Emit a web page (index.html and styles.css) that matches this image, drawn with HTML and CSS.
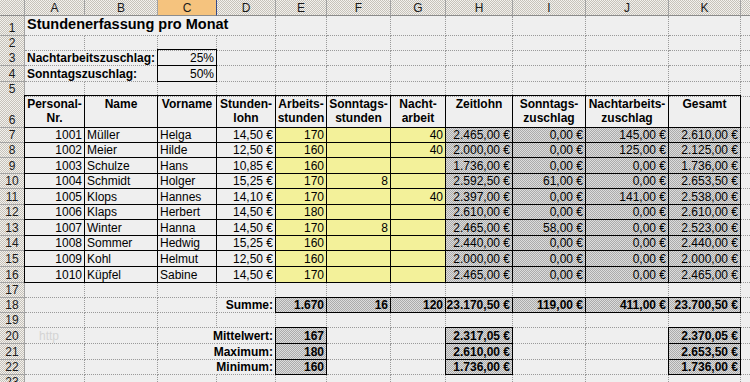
FILE: index.html
```html
<!DOCTYPE html>
<html lang="de">
<head>
<meta charset="utf-8">
<title>Stundenerfassung pro Monat</title>
<link rel="stylesheet" href="styles.css">
</head>
<body>
<div class="sheet">
  <div class="row h16">
    <div class="c hd"></div>
    <div class="c hd ctr">A</div>
    <div class="c hd ctr">B</div>
    <div class="c hd ctr sel">C</div>
    <div class="c hd ctr">D</div>
    <div class="c hd ctr">E</div>
    <div class="c hd ctr">F</div>
    <div class="c hd ctr">G</div>
    <div class="c hd ctr">H</div>
    <div class="c hd ctr">I</div>
    <div class="c hd ctr">J</div>
    <div class="c hd ctr">K</div>
    <div class="c hd last"></div>
  </div>

  <div class="row h20">
    <div class="c rh">1</div>
    <div class="c nb title">Stundenerfassung pro Monat</div>
    <div class="c nb"></div>
    <div class="c nb"></div>
    <div class="c"></div><div class="c"></div><div class="c"></div><div class="c"></div>
    <div class="c"></div><div class="c"></div><div class="c"></div><div class="c"></div>
    <div class="c last"></div>
  </div>

  <div class="row h14">
    <div class="c rh">2</div>
    <div class="c"></div><div class="c"></div><div class="c"></div><div class="c"></div>
    <div class="c"></div><div class="c"></div><div class="c"></div><div class="c"></div>
    <div class="c"></div><div class="c"></div><div class="c"></div>
    <div class="c last"></div>
  </div>

  <div class="row h16">
    <div class="c rh">3</div>
    <div class="c nb bold">Nachtarbeitszuschlag:</div>
    <div class="c"></div>
    <div class="c b r">25%</div>
    <div class="c"></div><div class="c"></div><div class="c"></div><div class="c"></div>
    <div class="c"></div><div class="c"></div><div class="c"></div><div class="c"></div>
    <div class="c last"></div>
  </div>

  <div class="row h16">
    <div class="c rh">4</div>
    <div class="c nb bold">Sonntagszuschlag:</div>
    <div class="c"></div>
    <div class="c b r">50%</div>
    <div class="c"></div><div class="c"></div><div class="c"></div><div class="c"></div>
    <div class="c"></div><div class="c"></div><div class="c"></div><div class="c"></div>
    <div class="c last"></div>
  </div>

  <div class="row h14">
    <div class="c rh">5</div>
    <div class="c"></div><div class="c"></div><div class="c"></div><div class="c"></div>
    <div class="c"></div><div class="c"></div><div class="c"></div><div class="c"></div>
    <div class="c"></div><div class="c"></div><div class="c"></div>
    <div class="c last"></div>
  </div>

  <div class="row h32">
    <div class="c rh">6</div>
    <div class="c b th">Personal-<br>Nr.</div>
    <div class="c b th">Name</div>
    <div class="c b th">Vorname</div>
    <div class="c b th">Stunden-<br>lohn</div>
    <div class="c b th">Arbeits-<br>stunden</div>
    <div class="c b th">Sonntags-<br>stunden</div>
    <div class="c b th">Nacht-<br>arbeit</div>
    <div class="c b th">Zeitlohn</div>
    <div class="c b th">Sonntags-<br>zuschlag</div>
    <div class="c b th">Nachtarbeits-<br>zuschlag</div>
    <div class="c b th">Gesamt</div>
    <div class="c last"></div>
  </div>

  <div class="row h15">
    <div class="c rh">7</div>
    <div class="c b r">1001</div><div class="c b">Müller</div><div class="c b">Helga</div><div class="c b r">14,50 €</div>
    <div class="c b r y">170</div><div class="c b r y"></div><div class="c b r y">40</div>
    <div class="c b r g">2.465,00 €</div><div class="c b r g">0,00 €</div><div class="c b r g">145,00 €</div><div class="c b r g">2.610,00 €</div>
    <div class="c last"></div>
  </div>

  <div class="row h15">
    <div class="c rh">8</div>
    <div class="c b r">1002</div><div class="c b">Meier</div><div class="c b">Hilde</div><div class="c b r">12,50 €</div>
    <div class="c b r y">160</div><div class="c b r y"></div><div class="c b r y">40</div>
    <div class="c b r g">2.000,00 €</div><div class="c b r g">0,00 €</div><div class="c b r g">125,00 €</div><div class="c b r g">2.125,00 €</div>
    <div class="c last"></div>
  </div>

  <div class="row h16">
    <div class="c rh">9</div>
    <div class="c b r">1003</div><div class="c b">Schulze</div><div class="c b">Hans</div><div class="c b r">10,85 €</div>
    <div class="c b r y">160</div><div class="c b r y"></div><div class="c b r y"></div>
    <div class="c b r g">1.736,00 €</div><div class="c b r g">0,00 €</div><div class="c b r g">0,00 €</div><div class="c b r g">1.736,00 €</div>
    <div class="c last"></div>
  </div>

  <div class="row h15">
    <div class="c rh">10</div>
    <div class="c b r">1004</div><div class="c b">Schmidt</div><div class="c b">Holger</div><div class="c b r">15,25 €</div>
    <div class="c b r y">170</div><div class="c b r y">8</div><div class="c b r y"></div>
    <div class="c b r g">2.592,50 €</div><div class="c b r g">61,00 €</div><div class="c b r g">0,00 €</div><div class="c b r g">2.653,50 €</div>
    <div class="c last"></div>
  </div>

  <div class="row h16">
    <div class="c rh">11</div>
    <div class="c b r">1005</div><div class="c b">Klops</div><div class="c b">Hannes</div><div class="c b r">14,10 €</div>
    <div class="c b r y">170</div><div class="c b r y"></div><div class="c b r y">40</div>
    <div class="c b r g">2.397,00 €</div><div class="c b r g">0,00 €</div><div class="c b r g">141,00 €</div><div class="c b r g">2.538,00 €</div>
    <div class="c last"></div>
  </div>

  <div class="row h15">
    <div class="c rh">12</div>
    <div class="c b r">1006</div><div class="c b">Klaps</div><div class="c b">Herbert</div><div class="c b r">14,50 €</div>
    <div class="c b r y">180</div><div class="c b r y"></div><div class="c b r y"></div>
    <div class="c b r g">2.610,00 €</div><div class="c b r g">0,00 €</div><div class="c b r g">0,00 €</div><div class="c b r g">2.610,00 €</div>
    <div class="c last"></div>
  </div>

  <div class="row h16">
    <div class="c rh">13</div>
    <div class="c b r">1007</div><div class="c b">Winter</div><div class="c b">Hanna</div><div class="c b r">14,50 €</div>
    <div class="c b r y">170</div><div class="c b r y">8</div><div class="c b r y"></div>
    <div class="c b r g">2.465,00 €</div><div class="c b r g">58,00 €</div><div class="c b r g">0,00 €</div><div class="c b r g">2.523,00 €</div>
    <div class="c last"></div>
  </div>

  <div class="row h15">
    <div class="c rh">14</div>
    <div class="c b r">1008</div><div class="c b">Sommer</div><div class="c b">Hedwig</div><div class="c b r">15,25 €</div>
    <div class="c b r y">160</div><div class="c b r y"></div><div class="c b r y"></div>
    <div class="c b r g">2.440,00 €</div><div class="c b r g">0,00 €</div><div class="c b r g">0,00 €</div><div class="c b r g">2.440,00 €</div>
    <div class="c last"></div>
  </div>

  <div class="row h16">
    <div class="c rh">15</div>
    <div class="c b r">1009</div><div class="c b">Kohl</div><div class="c b">Helmut</div><div class="c b r">12,50 €</div>
    <div class="c b r y">160</div><div class="c b r y"></div><div class="c b r y"></div>
    <div class="c b r g">2.000,00 €</div><div class="c b r g">0,00 €</div><div class="c b r g">0,00 €</div><div class="c b r g">2.000,00 €</div>
    <div class="c last"></div>
  </div>

  <div class="row h16">
    <div class="c rh">16</div>
    <div class="c b r">1010</div><div class="c b">Küpfel</div><div class="c b">Sabine</div><div class="c b r">14,50 €</div>
    <div class="c b r y">170</div><div class="c b r y"></div><div class="c b r y"></div>
    <div class="c b r g">2.465,00 €</div><div class="c b r g">0,00 €</div><div class="c b r g">0,00 €</div><div class="c b r g">2.465,00 €</div>
    <div class="c last"></div>
  </div>

  <div class="row h15">
    <div class="c rh">17</div>
    <div class="c"></div><div class="c"></div><div class="c"></div><div class="c"></div>
    <div class="c"></div><div class="c"></div><div class="c"></div><div class="c"></div>
    <div class="c"></div><div class="c"></div><div class="c"></div>
    <div class="c last"></div>
  </div>

  <div class="row h15">
    <div class="c rh">18</div>
    <div class="c"></div><div class="c"></div><div class="c"></div>
    <div class="c r bold">Summe:</div>
    <div class="c b r g bold">1.670</div><div class="c b r g bold">16</div><div class="c b r g bold">120</div>
    <div class="c b r g bold">23.170,50 €</div><div class="c b r g bold">119,00 €</div><div class="c b r g bold">411,00 €</div><div class="c b r g bold">23.700,50 €</div>
    <div class="c last"></div>
  </div>

  <div class="row h15">
    <div class="c rh">19</div>
    <div class="c"></div><div class="c"></div><div class="c"></div><div class="c"></div>
    <div class="c"></div><div class="c"></div><div class="c"></div><div class="c"></div>
    <div class="c"></div><div class="c"></div><div class="c"></div>
    <div class="c last"></div>
  </div>

  <div class="row h16">
    <div class="c rh">20</div>
    <div class="c faint">http</div><div class="c"></div><div class="c nb"></div>
    <div class="c r bold">Mittelwert:</div>
    <div class="c b r g bold">167</div><div class="c"></div><div class="c"></div>
    <div class="c b r g bold">2.317,05 €</div><div class="c"></div><div class="c"></div>
    <div class="c b r g bold">2.370,05 €</div>
    <div class="c last"></div>
  </div>

  <div class="row h16">
    <div class="c rh">21</div>
    <div class="c"></div><div class="c"></div><div class="c nb"></div>
    <div class="c r bold">Maximum:</div>
    <div class="c b r g bold">180</div><div class="c"></div><div class="c"></div>
    <div class="c b r g bold">2.610,00 €</div><div class="c"></div><div class="c"></div>
    <div class="c b r g bold">2.653,50 €</div>
    <div class="c last"></div>
  </div>

  <div class="row h15">
    <div class="c rh">22</div>
    <div class="c"></div><div class="c"></div><div class="c nb"></div>
    <div class="c r bold">Minimum:</div>
    <div class="c b r g bold">160</div><div class="c"></div><div class="c"></div>
    <div class="c b r g bold">1.736,00 €</div><div class="c"></div><div class="c"></div>
    <div class="c b r g bold">1.736,00 €</div>
    <div class="c last"></div>
  </div>

  <div class="row h15">
    <div class="c rh">23</div>
    <div class="c"></div><div class="c"></div><div class="c"></div><div class="c"></div>
    <div class="c"></div><div class="c"></div><div class="c"></div><div class="c"></div>
    <div class="c"></div><div class="c"></div><div class="c"></div>
    <div class="c last"></div>
  </div>
</div>
</body>
</html>
```

FILE: styles.css
```css
html, body {
  margin: 0;
  padding: 0;
  background: #efefef;
  overflow: hidden;
}

.sheet {
  width: 750px;
  height: 382px;
  overflow: hidden;
  font: 12px/14px "Liberation Sans", Arial, sans-serif;
  color: #000;
}

.row {
  display: grid;
  grid-template-columns: 25px 60px 73px 59px 59px 51px 64px 55px 67px 73px 83px 72px 1fr;
  background: #efefef;
}

.h14 { height: 14px; }
.h15 { height: 15px; }
.h16 { height: 16px; }
.h20 { height: 20px; }
.h32 { height: 32px; }

.c {
  box-sizing: border-box;
  display: flex;
  align-items: flex-end;
  justify-content: flex-start;
  padding: 0 2px;
  min-width: 0;
  white-space: nowrap;
  border-right: 1px dotted #9a9a9a;
  border-bottom: 1px dotted #9a9a9a;
}

.c.last { border-right: none; }

.c.nb { border-right-color: transparent; }

.r { justify-content: flex-end; }
.ctr { justify-content: center; }
.bold { font-weight: bold; }

/* header cells (column letters, row numbers) */
.hd,
.rh {
  background: repeating-conic-gradient(#c6c2ba 0 25%, #f3f1ed 0 50%) 0 0 / 2px 2px;
  border-right: 1px solid #a3a3a3;
  border-bottom: 1px solid #8c8c8c;
  color: #1a1a1a;
}

.rh {
  justify-content: center;
  border-bottom-color: #a3a3a3;
}

.hd.sel {
  background: #f5c37e;
  border-right: 1px solid #34498a;
}

.title {
  font-size: 14.5px;
  line-height: 16px;
  font-weight: bold;
  padding-bottom: 3px;
  overflow: visible;
}

/* bordered cells */
.b {
  border-right: 1px solid #000;
  border-bottom: 1px solid #000;
  box-shadow: -1px 0 0 #000, 0 -1px 0 #000, -1px -1px 0 #000;
}

.th {
  font-weight: bold;
  align-items: flex-start;
  justify-content: center;
  text-align: center;
  padding-top: 1px;
}

.y { background: #f3f19a; }

.g {
  background: repeating-conic-gradient(#ababab 0 25%, #dcdcdc 0 50%) 0 0 / 2px 2px;
}

.faint {
  color: #d4d4d4;
  padding-left: 14px;
}
```
